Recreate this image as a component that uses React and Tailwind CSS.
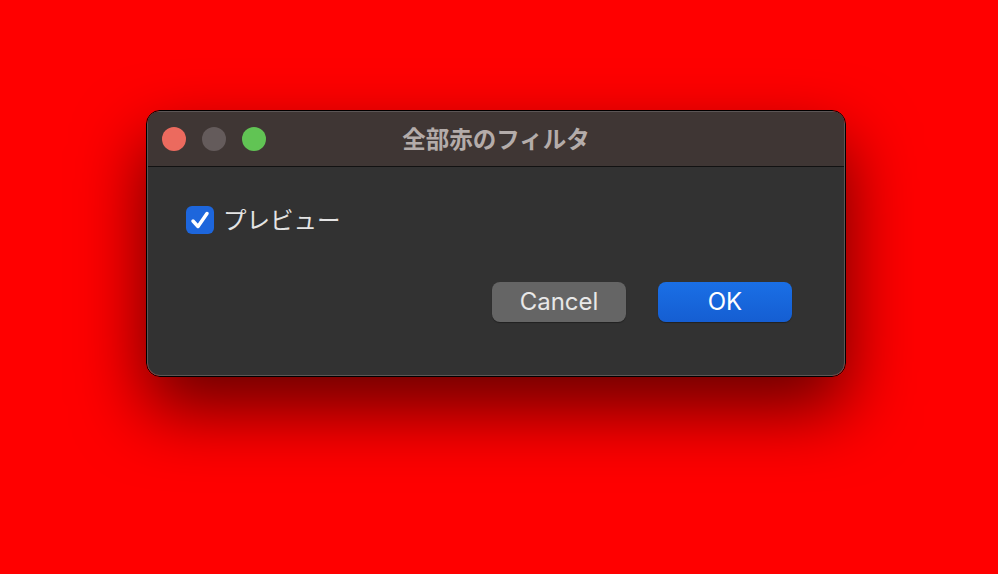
import React, { useState } from 'react';

const jp = { fontFamily: '"Noto Sans CJK JP", "Noto Sans", sans-serif' };
const ui = { fontFamily: 'Inter, "Noto Sans CJK JP", sans-serif' };

const TrafficLights = () => (
  <div className="flex items-center gap-4 pl-[14px]">
    <span className="w-6 h-6 rounded-full bg-[#ec6a5e]" />
    <span className="w-6 h-6 rounded-full bg-[#645b5b]" />
    <span className="w-6 h-6 rounded-full bg-[#61c454]" />
  </div>
);

const App = () => {
  const [preview, setPreview] = useState(true);

  return (
    <div className="w-[998px] h-[574px] bg-[#ff0000] pt-[110px] pl-[146px] overflow-hidden">
      <div className="w-[700px] h-[267px] rounded-[14px] border border-black shadow-[0_32px_70px_rgba(0,0,0,0.6)] overflow-hidden">
        <div className="h-full rounded-[13px] border border-[#5c5656] bg-[#323232] flex flex-col">
          {/* title bar */}
          <div className="relative h-[55px] shrink-0 bg-[#3f3634] border-b border-[#121212] flex items-center">
            <TrafficLights />
            <div
              className="absolute inset-0 flex items-center justify-center text-[23.5px] font-bold text-[#b4acaa]"
              style={jp}
            >
              全部赤のフィルタ
            </div>
          </div>

          {/* body */}
          <div className="flex-1 flex flex-col pl-[38px] pr-[39px] pt-[39px]">
            <label className="flex items-center gap-[9px] cursor-pointer select-none">
              <button
                onClick={() => setPreview(!preview)}
                className={`w-[28px] h-[28px] rounded-[6px] flex items-center justify-center ${
                  preview ? 'bg-[#1d66dc]' : 'bg-[#555] border border-[#777]'
                }`}
              >
                {preview && (
                  <svg width="22" height="22" viewBox="0 0 22 22" fill="none">
                    <path
                      d="M4 12 L9 17.5 L18 4.5"
                      stroke="white"
                      strokeWidth="3.5"
                      strokeLinecap="round"
                      strokeLinejoin="round"
                    />
                  </svg>
                )}
              </button>
              <span className="text-[23.5px] text-[#e4e4e4] leading-none" style={jp}>
                プレビュー
              </span>
            </label>

            <div className="flex justify-end gap-[32px] mt-[48px] pr-[13px]">
              <button
                className="w-[134px] h-[40px] rounded-[8px] bg-[#656565] text-[#e8e8e8] text-[24px] leading-none shadow-[0_1px_1px_rgba(0,0,0,0.35)]"
                style={ui}
              >
                Cancel
              </button>
              <button
                className="w-[134px] h-[40px] rounded-[8px] bg-gradient-to-b from-[#1a6fe6] to-[#155ed2] text-white text-[24px] leading-none shadow-[0_1px_1px_rgba(0,0,0,0.35)]"
                style={ui}
              >
                OK
              </button>
            </div>
          </div>
        </div>
      </div>
    </div>
  );
};

export default App;
